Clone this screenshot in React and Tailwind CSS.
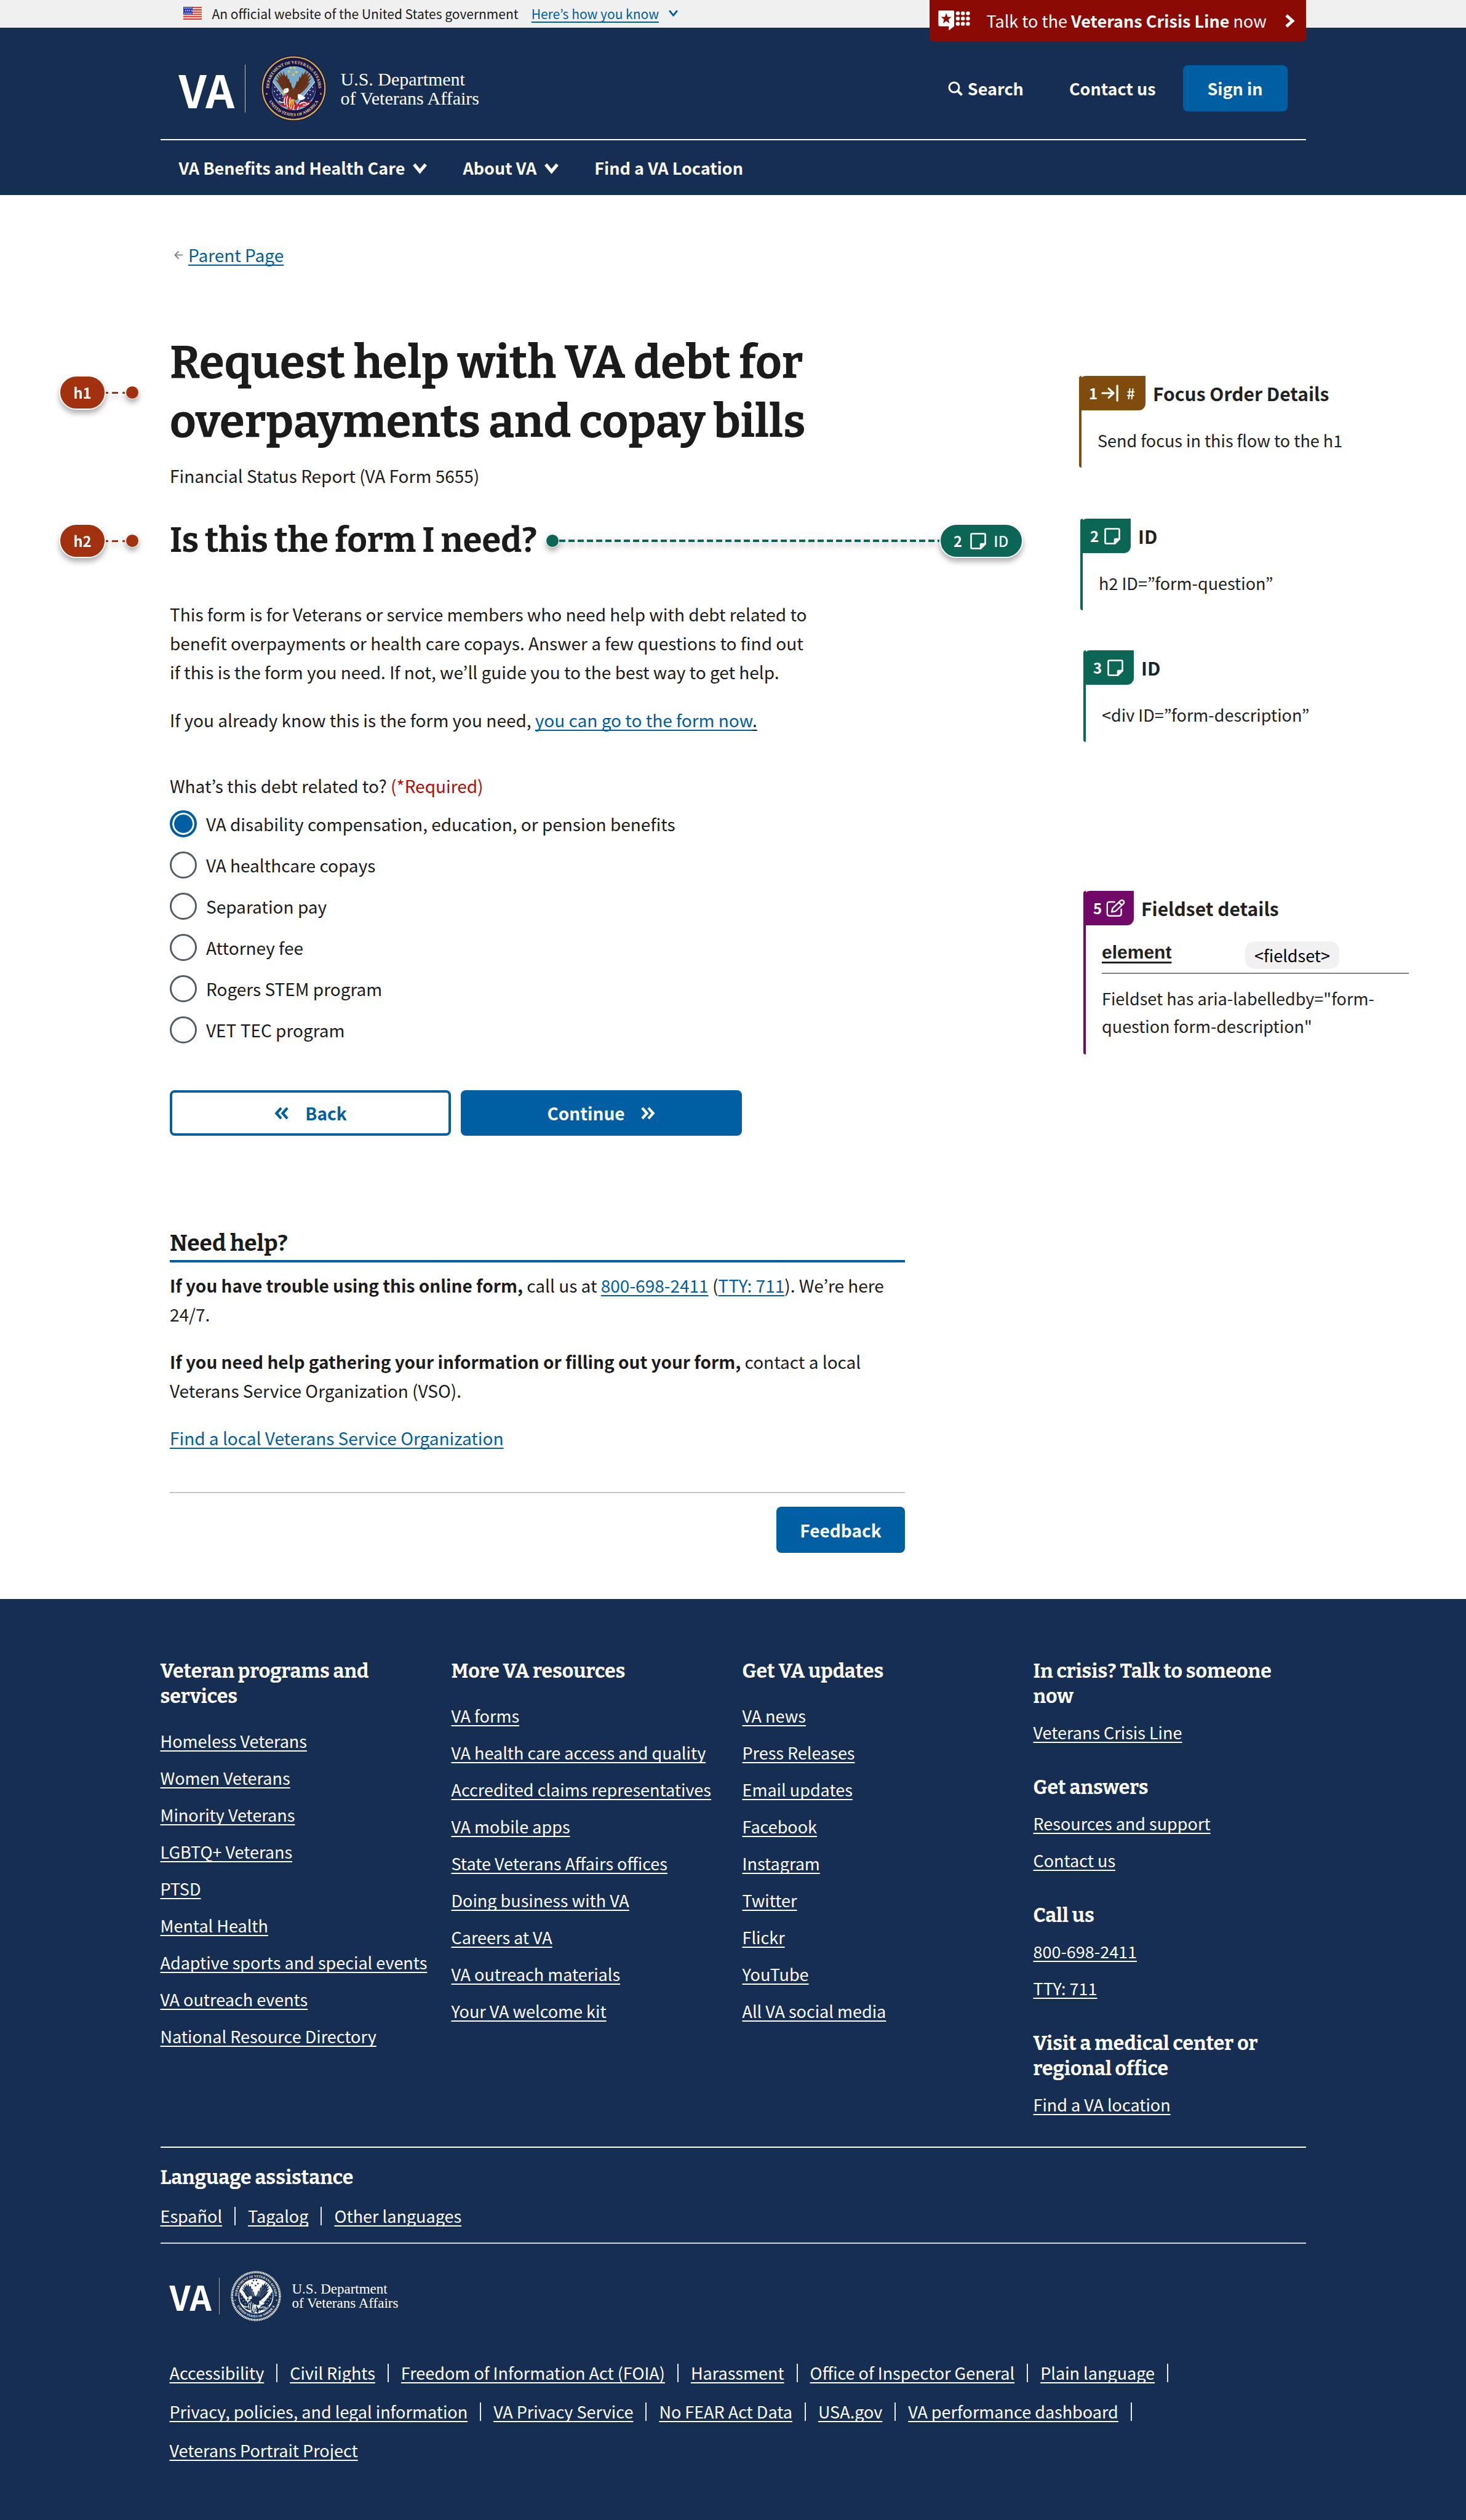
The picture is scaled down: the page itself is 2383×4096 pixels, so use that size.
import React from "react";

const SANS = "font-['Noto_Sans_CJK_KR','Noto_Sans',sans-serif]";
const SLAB = "font-['Bitter','DejaVu_Serif_Condensed','DejaVu_Serif',serif]";
const UNDERLINE = "underline decoration-2 underline-offset-[4px] [text-decoration-skip-ink:none]";
const LINK = "text-[#005ea2] " + UNDERLINE;

/* ---------- icons ---------- */

function Chevron({ className, dir = "down", thick = 4 }) {
  const d = { down: "M3 6 L12 17 L21 6", right: "M7 3 L17 12 L7 21" }[dir];
  return (
    <svg viewBox="0 0 24 24" className={className} fill="none" stroke="currentColor" strokeWidth={thick} aria-hidden="true">
      <path d={d} />
    </svg>
  );
}

function DoubleChevron({ className, flip }) {
  return (
    <svg viewBox="0 0 26 26" className={className} fill="none" stroke="currentColor" strokeWidth="4.4" aria-hidden="true">
      {flip ? <path d="M3 4 L11 13 L3 22 M13.5 4 L21.5 13 L13.5 22" /> : <path d="M12.5 4 L4.5 13 L12.5 22 M23 4 L15 13 L23 22" />}
    </svg>
  );
}

function Flag() {
  return (
    <svg viewBox="0 0 32 22" className="h-[21px] w-[30px]" aria-hidden="true">
      <rect width="32" height="22" fill="#fff" />
      {[0, 4, 8, 12, 16, 20].map((y) => (
        <rect key={y} y={y} width="32" height="2.2" fill="#e8321c" />
      ))}
      <rect width="16" height="12.5" fill="#2a35b8" />
      {[2, 6.5, 11].map((y, i) =>
        [2.5, 6, 9.5, 13].map((x) => <rect key={x + "-" + y} x={x + (i === 1 ? 0.8 : -0.6)} y={y - 0.9} width="1.6" height="1.9" fill="#fff" />)
      )}
    </svg>
  );
}

function CrisisIcon() {
  return (
    <svg viewBox="0 0 56 36" className="h-[33px] w-[52px]" fill="#fff" aria-hidden="true">
      <path d="M2 0 H26 Q28 0 28 2 V28 L18.5 35.5 V28 H2 Q0 28 0 26 V2 Q0 0 2 0Z" />
      <path d="M14 4.5 L16.4 11.4 L23.5 11.5 L17.9 15.9 L19.9 22.8 L14 18.7 L8.1 22.8 L10.1 15.9 L4.5 11.5 L11.6 11.4Z" fill="#8b0a03" />
      {[5, 14.3, 23.6].map((y) => [34.5, 43.5, 52.5].map((x) => <circle key={x + "-" + y} cx={x} cy={y} r="3.5" />))}
    </svg>
  );
}

function SearchIcon() {
  return (
    <svg viewBox="0 0 24 24" className="size-[24px]" fill="none" stroke="currentColor" strokeWidth="3" aria-hidden="true">
      <circle cx="10" cy="10" r="8" />
      <path d="M15.5 15.5 L22.5 22.5" strokeWidth="4" />
    </svg>
  );
}

function NoteIcon({ className }) {
  return (
    <svg viewBox="0 0 26 27" className={className} fill="none" stroke="#fff" strokeWidth="2.6" strokeLinejoin="round" aria-hidden="true">
      <path d="M3 1.5 H23 Q24.5 1.5 24.5 3 V18 L17 25.5 H3 Q1.5 25.5 1.5 24 V3 Q1.5 1.5 3 1.5Z" />
      <path d="M17 25.5 V19 Q17 18 18 18 H24.5Z" fill="#fff" />
    </svg>
  );
}

function TabIcon() {
  return (
    <svg viewBox="0 0 30 30" className="size-[28px]" fill="none" stroke="#fff" strokeWidth="3.4" strokeLinecap="round" strokeLinejoin="round" aria-hidden="true">
      <path d="M2 15 H21 M13 7 L21.5 15 L13 23 M28 2 V28" />
    </svg>
  );
}

function EditIcon() {
  return (
    <svg viewBox="0 0 34 32" className="h-[30px] w-[31px]" fill="none" stroke="#fff" strokeWidth="2.6" strokeLinecap="round" strokeLinejoin="round" aria-hidden="true">
      <path d="M15 5 H6 Q2 5 2 9 V26 Q2 30 6 30 H23 Q27 30 27 26 V18" />
      <path d="M10 23 L11.5 16.5 L25.5 3 Q28 0.8 30.8 3 Q33 5.5 31 8 L17 21.5 Z M23 6 L28 11" />
    </svg>
  );
}

function Star({ x, y, r, fill }) {
  const pts = Array.from({ length: 10 }, (_, i) => {
    const a = (Math.PI / 5) * i - Math.PI / 2;
    const q = i % 2 ? r * 0.42 : r;
    return `${(x + q * Math.cos(a)).toFixed(1)},${(y + q * Math.sin(a)).toFixed(1)}`;
  }).join(" ");
  return <polygon points={pts} fill={fill} />;
}

const LEFT_WING =
  "M152 222 C132 200 108 180 96 152 L74 124 L94 134 L80 106 L98 122 L88 92 L106 112 L102 86 L118 108 L118 84 L130 112 L138 100 L144 128 L150 122 L153 148 L160 142 C160 160 166 172 174 178 L188 214 Z";
const RIGHT_WING =
  "M188 220 C200 208 226 190 244 168 L262 140 L246 148 L270 118 L250 128 L268 98 L246 112 L260 82 L238 102 L242 76 L224 104 L220 90 L210 120 L204 112 L198 142 L190 136 C186 156 180 168 172 178 L160 212 Z";

function Seal({ id, mono, className }) {
  const navy = mono ? "#162e51" : "#1a1748";
  const gold = mono ? "#fff" : "#e5c44f";
  const brown = mono ? "#162e51" : "#6b3519";
  const dark = mono ? "#fff" : "#3b1c0e";
  const sky = mono ? "#fff" : "#78abc9";
  const flagBlue = mono ? "#162e51" : "#232a63";
  const red = mono ? "#162e51" : "#c4202f";
  return (
    <svg viewBox="0 0 348 348" className={className} role="img" aria-label="Department of Veterans Affairs seal">
      <defs>
        <path id={id + "-top"} d="M45 194 A130.5 130.5 0 1 1 303 194" />
        <path id={id + "-bottom"} d="M27 190 A148 148 0 0 0 321 190" />
        <clipPath id={id + "-disc"}>
          <circle cx="174" cy="174" r="118" />
        </clipPath>
      </defs>
      <circle cx="174" cy="174" r="173" fill={navy} />
      <circle cx="174" cy="174" r="165" fill="none" stroke={gold} strokeWidth={mono ? 15 : 7} strokeDasharray={mono ? "7 4" : undefined} />
      {!mono && <circle cx="174" cy="174" r="165" fill="none" stroke="#8d5b22" strokeWidth="7" strokeDasharray="2 8" />}
      <circle cx="174" cy="174" r="118" fill={sky} />
      <circle cx="174" cy="174" r="119" fill="none" stroke={mono ? "#fff" : "#0f0d33"} strokeWidth="4" />
      <g fontFamily="'Liberation Serif', serif" fontWeight="700" fontSize="22" fill={mono ? "#fff" : "#e8dc9a"}>
        <text textAnchor="middle">
          <textPath href={"#" + id + "-top"} startOffset="50%">DEPARTMENT OF VETERANS AFFAIRS</textPath>
        </text>
        <text textAnchor="middle">
          <textPath href={"#" + id + "-bottom"} startOffset="50%">UNITED STATES OF AMERICA</textPath>
        </text>
      </g>
      <circle cx="31" cy="203" r="4" fill={gold} />
      <circle cx="317" cy="203" r="4" fill={gold} />
      <g clipPath={`url(#${id}-disc)`}>
        {/* flags */}
        <path d="M60 134 L160 262 L118 262 Q84 240 68 218 Q56 190 60 134Z" fill={flagBlue} />
        <path d="M290 134 L188 262 L232 262 Q264 240 280 218 Q294 180 290 134Z" fill={flagBlue} />
        <g fill="#fff">
          {[[74, 168], [72, 190], [88, 186], [86, 208], [102, 204], [100, 226], [274, 168], [276, 190], [260, 186], [262, 208], [246, 204], [250, 226], [232, 222], [116, 222]].map(([x, y]) => (
            <circle key={x + "-" + y} cx={x} cy={y} r="3" />
          ))}
        </g>
        <path d="M58 132 L160 268" stroke={mono ? "#fff" : "#d8dde6"} strokeWidth={mono ? 9 : 4} />
        <path d="M292 132 L188 262" stroke={mono ? "#fff" : "#d8dde6"} strokeWidth={mono ? 9 : 4} />
        <path d="M84 240 Q100 262 126 258 Q112 236 122 212 Q142 198 160 214 L192 262 Q226 232 240 246 Q254 252 266 236 Q262 268 232 272 Q206 262 190 296 Q174 268 156 296 L142 300 Q146 280 138 272 Q100 274 84 240Z" fill={red} />
        <g stroke="#fff" strokeWidth="5" fill="none">
          <path d="M96 242 Q108 252 122 248 M128 262 Q118 240 130 220 M142 274 Q130 244 142 214 M156 284 Q146 250 156 222" />
          <path d="M204 258 Q228 240 244 256 M200 270 Q196 274 192 290 M222 262 Q238 268 256 252 M172 286 L176 262" />
        </g>
        {/* eagle */}
        <path d={LEFT_WING} fill={brown} />
        <path d={RIGHT_WING} fill={brown} />
        <g stroke={dark} strokeWidth={mono ? 2 : 2.5} fill="none" opacity="0.75">
          <path d="M96 134 L140 184 M106 116 L148 180 M120 112 L154 176 M132 116 L160 176 M146 132 L164 178" />
          <path d="M250 134 L206 184 M246 116 L198 180 M230 108 L192 176 M216 116 L186 176 M200 134 L180 178" />
        </g>
        <path d="M138 186 Q156 168 178 180 Q200 200 196 232 Q184 242 172 232 Q152 222 138 200Z" fill={brown} />
        <path d="M146 174 Q128 170 120 182 Q116 192 122 202 L132 198 Q146 198 148 186Z" fill="#fff" stroke={mono ? "#162e51" : "none"} strokeWidth="2" />
        <path d="M121 186 L110 200 L122 204Z" fill={mono ? "#162e51" : "#f0b52c"} />
        <circle cx="129" cy="184" r="2.2" fill={navy} />
        <path d="M196 206 Q214 202 234 224 Q226 238 206 236 L196 228Z" fill="#fff" stroke={mono ? "#162e51" : "#cfd6df"} strokeWidth="2" />
        <path d="M162 232 L150 272 M166 232 L162 282 M172 232 L172 262" stroke={mono ? "#fff" : "#efb62e"} strokeWidth="6" />
        {[[157, 66], [178, 66], [148, 86], [188, 88], [172, 102]].map(([x, y]) => (
          <Star key={x + "-" + y} x={x} y={y} r={9} fill={mono ? "#162e51" : "#f3cf45"} />
        ))}
      </g>
    </svg>
  );
}

/* ---------- header ---------- */

const NAV = "flex items-center gap-[12px] text-[27px] font-bold text-white";

function Header() {
  return (
    <header className="relative">
      <div className="bg-[#f0f0f0]">
        <div className="mx-auto flex h-[45px] max-w-[1862px] items-center pb-[2px] pl-[37px] text-[21px] leading-[30px]">
          <Flag />
          <span className="ml-[17px]">An official website of the United States government</span>
          <button type="button" className="ml-[21px] flex items-center gap-[15px] text-[#005ea2]">
            <span className={UNDERLINE}>Here’s how you know</span>
            <Chevron className="size-[17px]" thick={4} />
          </button>
        </div>
      </div>
      <div className="bg-[#162e51] text-white">
        <div className="relative mx-auto max-w-[1862px]">
          <a
            href="#crisis"
            className="absolute right-0 -top-[45px] flex h-[67px] w-[612px] items-center rounded-b-[6px] bg-[#8b0a03] pl-[14px] pr-[15px] text-[27px] leading-[40px]"
          >
            <CrisisIcon />
            <span className="ml-[27px]">
              Talk to the <strong>Veterans Crisis Line</strong> now
            </span>
            <Chevron dir="right" className="ml-auto size-[24px]" thick={5} />
          </a>
          <div className="flex h-[183px] items-center justify-between border-b-2 border-white pl-[30px] pr-[30px] pt-[16px]">
            <a href="#home" className="flex items-center">
              <span className="w-[88px] text-[73px] font-bold leading-[76px]">VA</span>
              <span className="ml-[19px] h-[78px] w-px bg-[#b9c1cd]" />
              <Seal id="seal" className="ml-[25px] size-[107px]" />
              <span className="ml-[23px] font-['Liberation_Serif',serif] text-[30px] leading-[31px]">
                U.S. Department
                <br />
                of Veterans Affairs
              </span>
            </a>
            <div className="flex items-center text-[27px] leading-[40px] font-bold">
              <button type="button" className="flex items-center gap-[8px]">
                <SearchIcon />
                Search
              </button>
              <a href="#contact" className="ml-[74px]">Contact us</a>
              <button type="button" className="ml-[44px] h-[75px] w-[170px] rounded-[8px] bg-[#005ea2]">Sign in</button>
            </div>
          </div>
          <nav className="flex h-[89px] items-center gap-[57px] pt-[2px] pl-[30px]">
            <button type="button" className={NAV}>
              VA Benefits and Health Care
              <Chevron className="size-[25px]" thick={5} />
            </button>
            <button type="button" className={NAV}>
              About VA
              <Chevron className="size-[25px]" thick={5} />
            </button>
            <a href="#locations" className={NAV}>Find a VA Location</a>
          </nav>
        </div>
      </div>
    </header>
  );
}

/* ---------- annotations ---------- */

function HeadingPill({ children }) {
  return (
    <span className={`absolute right-full top-1/2 mr-[50px] flex -translate-y-1/2 items-center drop-shadow-[0_6px_4px_rgba(0,0,0,0.3)] ${SANS}`}>
      <span className="flex h-[56px] w-[76px] items-center justify-center rounded-full border-2 border-white bg-[#a1310f] text-[24px] font-bold leading-[30px] text-white">
        {children}
      </span>
      <span className="h-[3px] w-[32px] bg-[repeating-linear-gradient(90deg,#a1310f_0_4px,transparent_4px_10px,#a1310f_10px_20px,transparent_20px_27px)]" />
      <span className="size-[22px] rounded-full border border-white bg-[#a1310f]" />
    </span>
  );
}

function IdConnector() {
  return (
    <span className={`absolute left-full top-1/2 ml-[14px] flex w-[776px] -translate-y-1/2 items-center drop-shadow-[0_6px_4px_rgba(0,0,0,0.3)] ${SANS}`}>
      <span className="size-[22px] rounded-full border border-white bg-[#0b6655]" />
      <span className="h-[4px] flex-1 bg-[repeating-linear-gradient(90deg,#0b6655_0_10px,transparent_10px_15px)]" />
      <span className="flex h-[56px] w-[136px] items-center rounded-full border-2 border-white bg-[#0b6655] pl-[21px] text-[24px] leading-[30px] text-white">
        <span className="font-bold">2</span>
        <NoteIcon className="ml-[13px] h-[27px] w-[26px]" />
        <span className="ml-[12px] font-medium">ID</span>
      </span>
    </span>
  );
}

function Note({ color, badge, title, badgeWidth, className = "", children }) {
  return (
    <section className={`relative ${className}`}>
      <span className={`absolute inset-y-0 left-0 w-[4px] rounded-l-[4px] ${color}`} />
      <div className="flex items-center">
        <span className={`relative flex h-[56px] ${badgeWidth} items-center rounded-tl-[11px] rounded-br-[11px] pl-[16px] text-[24px] font-bold leading-[30px] text-white ${color}`}>
          {badge}
        </span>
        <h3 className="ml-[12px] text-[30px] font-bold leading-[44px]">{title}</h3>
      </div>
      {children}
    </section>
  );
}

function Annotations() {
  const body = "mt-[26px] pl-[30px] pb-[22px] text-[27px] leading-[45px]";
  return (
    <aside className="w-[536px] shrink-0 pt-[294px] text-[#212121]">
      <Note
        color="bg-[#804c0e]"
        badgeWidth="w-[108px]"
        title="Focus Order Details"
        badge={
          <>
            <span className="mr-[6px]">1</span>
            <TabIcon />
            <span className="ml-[13px] text-[24px] font-medium">#</span>
          </>
        }
      >
        <p className={body}>Send focus in this flow to the h1</p>
      </Note>
      <Note
        color="bg-[#0b6655]"
        badgeWidth="w-[82px]"
        title="ID"
        className="mt-[83px] ml-[2px]"
        badge={
          <>
            <span className="mr-[9px]">2</span>
            <NoteIcon className="h-[27px] w-[26px]" />
          </>
        }
      >
        <p className={body}>h2 ID=”form-question”</p>
      </Note>
      <Note
        color="bg-[#0b6655]"
        badgeWidth="w-[82px]"
        title="ID"
        className="mt-[65px] ml-[7px]"
        badge={
          <>
            <span className="mr-[9px]">3</span>
            <NoteIcon className="h-[27px] w-[26px]" />
          </>
        }
      >
        <p className={body}>&lt;div ID=”form-description”</p>
      </Note>
      <Note
        color="bg-[#710968]"
        badgeWidth="w-[82px]"
        title="Fieldset details"
        className="mt-[242px] ml-[7px]"
        badge={
          <>
            <span className="mr-[7px]">5</span>
            <EditIcon />
          </>
        }
      >
        <div className="mt-[26px] ml-[30px]">
          <div className="flex items-start border-b-2 border-[#808080] pb-[6px]">
            <span className="w-[233px] font-['Liberation_Sans',sans-serif] text-[30px] font-bold leading-[35px] underline decoration-[3px] underline-offset-[5px]">
              element
            </span>
            <code className={`h-[45px] rounded-[15px] bg-[#f1f1f1] px-[15px] text-[27px] leading-[45px] text-black ${SANS}`}>&lt;fieldset&gt;</code>
          </div>
          <p className="mt-[17px] pb-[24px] text-[27px] leading-[45px]">
            Fieldset has aria-labelledby="form-
            <br />
            question form-description"
          </p>
        </div>
      </Note>
    </aside>
  );
}

/* ---------- main content ---------- */

const OPTIONS = [
  "VA disability compensation, education, or pension benefits",
  "VA healthcare copays",
  "Separation pay",
  "Attorney fee",
  "Rogers STEM program",
  "VET TEC program",
];

function Content() {
  return (
    <article className="w-[1195px] shrink-0 pt-[73px] text-[28px] leading-[48px] text-[#1b1b1b]">
      <a href="#parent" className="ml-[7px] flex items-center">
        <svg viewBox="0 0 16 16" className="mr-[8px] size-[15px]" fill="none" stroke="#757575" strokeWidth="1.8" aria-hidden="true">
          <path d="M15 8 H2 M8 1.5 L1.5 8 L8 14.5" />
        </svg>
        <span className={LINK}>Parent Page</span>
      </a>
      <h1 className={`relative mt-[104px] text-[74px] font-bold leading-[96px] ${SLAB}`}>
        <HeadingPill>h1</HeadingPill>
        Request help with VA debt for
        <br />
        overpayments and copay bills
      </h1>
      <p className="mt-[15px]">Financial Status Report (VA Form 5655)</p>
      <h2 className={`relative mt-[46px] w-fit text-[56px] font-bold leading-[72px] ${SLAB}`}>
        <HeadingPill>h2</HeadingPill>
        Is this the form I need?
        <IdConnector />
      </h2>
      <p className="mt-[60px] max-w-[1046px] leading-[47px]">
        This form is for Veterans or service members who need help with debt related to benefit overpayments or health care
        copays. Answer a few questions to find out if this is the form you need. If not, we’ll guide you to the best way to get help.
      </p>
      <p className="mt-[30px]">
        If you already know this is the form you need,{" "}
        <span className={UNDERLINE}>
          <a href="#form" className={LINK}>you can go to the form now</a>.
        </span>
      </p>
      <fieldset className="mt-[59px]">
        <legend>
          What’s this debt related to? <span className="text-[#b50909]">(*Required)</span>
        </legend>
        <div className="mt-[4px]">
          {OPTIONS.map((label, i) => (
            <label key={label} className="flex h-[67px] items-center gap-[15px]">
              <input
                type="radio"
                name="debt"
                defaultChecked={i === 0}
                className="size-[44px] appearance-none rounded-full border-3 border-[#565c65] bg-white checked:border-4 checked:border-[#005ea2] checked:bg-[#005ea2] checked:shadow-[inset_0_0_0_3px_white]"
              />
              {label}
            </label>
          ))}
        </div>
      </fieldset>
      <div className="mt-[65px] flex gap-[16px] font-bold">
        <button type="button" className="flex h-[74px] w-[457px] items-center justify-center gap-[26px] rounded-[8px] border-4 border-[#005ea2] text-[#005ea2]">
          <DoubleChevron className="size-[25px]" />
          Back
        </button>
        <button type="button" className="flex h-[74px] w-[457px] items-center justify-center gap-[25px] rounded-[8px] bg-[#005ea2] text-white">
          Continue
          <DoubleChevron flip className="size-[25px]" />
        </button>
      </div>
      <section className="mt-[151px] leading-[47px]">
        <h2 className={`border-b-4 border-[#005ea2] pb-[3px] text-[37px] font-bold leading-[48px] ${SLAB}`}>Need help?</h2>
        <p className="mt-[14px]">
          <strong>If you have trouble using this online form,</strong> call us at <a href="#call" className={LINK}>800-698-2411</a> (
          <a href="#tty" className={LINK}>TTY: 711</a>). We’re here
          <br />
          24/7.
        </p>
        <p className="mt-[30px]">
          <strong>If you need help gathering your information or filling out your form,</strong> contact a local
          <br />
          Veterans Service Organization (VSO).
        </p>
        <p className="mt-[30px]">
          <a href="#vso" className={LINK}>Find a local Veterans Service Organization</a>
        </p>
      </section>
      <div className="mt-[64px] flex justify-end border-t-2 border-[#c4c6c8] pt-[22px] pb-[75px]">
        <button type="button" className="h-[75px] w-[209px] rounded-[8px] bg-[#005ea2] font-bold text-white">Feedback</button>
      </div>
    </article>
  );
}

/* ---------- footer ---------- */

const PROGRAMS = ["Homeless Veterans", "Women Veterans", "Minority Veterans", "LGBTQ+ Veterans", "PTSD", "Mental Health", "Adaptive sports and special events", "VA outreach events", "National Resource Directory"];
const RESOURCES = ["VA forms", "VA health care access and quality", "Accredited claims representatives", "VA mobile apps", "State Veterans Affairs offices", "Doing business with VA", "Careers at VA", "VA outreach materials", "Your VA welcome kit"];
const UPDATES = ["VA news", "Press Releases", "Email updates", "Facebook", "Instagram", "Twitter", "Flickr", "YouTube", "All VA social media"];
const CONTACT = [
  ["In crisis? Talk to someone now", ["Veterans Crisis Line"]],
  ["Get answers", ["Resources and support", "Contact us"]],
  ["Call us", ["800-698-2411", "TTY: 711"]],
  ["Visit a medical center or regional office", ["Find a VA location"]],
];
const POLICIES = ["Accessibility", "Civil Rights", "Freedom of Information Act (FOIA)", "Harassment", "Office of Inspector General", "Plain language", "Privacy, policies, and legal information", "VA Privacy Service", "No FEAR Act Data", "USA.gov", "VA performance dashboard", "Veterans Portrait Project"];

const FOOT_HEAD = `max-w-[430px] text-[32px] font-bold leading-[41px] ${SLAB}`;

function Links({ items, className }) {
  return (
    <ul className={className}>
      {items.map((t) => (
        <li key={t}>
          <a href="#link" className={UNDERLINE}>{t}</a>
        </li>
      ))}
    </ul>
  );
}

function PipeList({ items, className }) {
  return (
    <ul className={`flex flex-wrap ${className}`}>
      {items.map((t, i) => (
        <li key={t} className="flex items-center">
          <a href="#link" className={UNDERLINE}>{t}</a>
          {i < items.length - 1 && <span className="mx-[20px] h-[30px] w-[2px] bg-white/90" />}
        </li>
      ))}
    </ul>
  );
}

function Footer() {
  return (
    <footer className="grow bg-[#162e51] text-[27px] leading-[60px] text-white">
      <div className="mx-auto max-w-[1862px] pt-[97px]">
        <div className="grid grid-cols-4 gap-x-[30px] border-b-2 border-white pb-[38px]">
          {[["Veteran programs and services", PROGRAMS], ["More VA resources", RESOURCES], ["Get VA updates", UPDATES]].map(([title, items]) => (
            <section key={title}>
              <h2 className={FOOT_HEAD}>{title}</h2>
              <Links items={items} className="mt-[22px]" />
            </section>
          ))}
          <div className="flex flex-col gap-[39px]">
            {CONTACT.map(([title, items]) => (
              <section key={title}>
                <h2 className={FOOT_HEAD}>{title}</h2>
                <Links items={items} className="mt-[8px]" />
              </section>
            ))}
          </div>
        </div>
        <div className="border-b-2 border-white/80 pt-[28px] pb-[13px]">
          <h2 className={FOOT_HEAD}>Language assistance</h2>
          <PipeList items={["Español", "Tagalog", "Other languages"]} className="mt-[12px]" />
        </div>
        <a href="#home" className="mt-[44px] ml-[15px] flex w-fit items-center">
          <span className="w-[66px] text-[55px] font-bold leading-[60px]">VA</span>
          <span className="ml-[14px] h-[60px] w-px bg-[#9aa5b5]" />
          <Seal id="seal-mono" mono className="ml-[18px] size-[82px]" />
          <span className="ml-[18px] font-['Liberation_Serif',serif] text-[23px] leading-[23px]">
            U.S. Department
            <br />
            of Veterans Affairs
          </span>
        </a>
        <PipeList items={POLICIES} className="mt-[52px] ml-[15px] leading-[63px]" />
      </div>
    </footer>
  );
}

export default function App() {
  return (
    <div className={`flex min-h-screen flex-col bg-white text-[#1b1b1b] ${SANS}`}>
      <Header />
      <main className="flex justify-between pl-[276px] pr-[93px]">
        <Content />
        <Annotations />
      </main>
      <Footer />
    </div>
  );
}
